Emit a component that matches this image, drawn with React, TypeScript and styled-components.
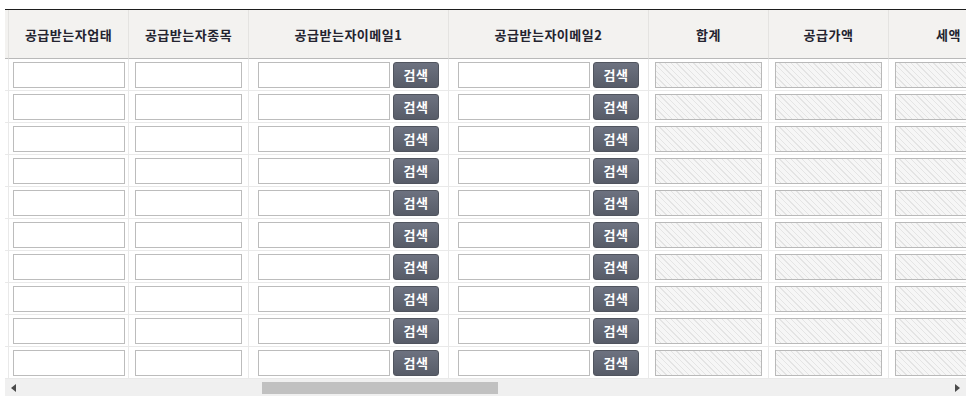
import React, { useLayoutEffect, useRef, useState } from 'react';
import styled, { createGlobalStyle } from 'styled-components';

const GlobalStyle = createGlobalStyle`
  body {
    margin: 0;
    background: #fff;
    font-family: "Noto Sans CJK KR", "Noto Sans", sans-serif;
  }
`;

type Kind = 'text' | 'search' | 'disabled';

interface Column {
  label: string;
  width: number;
  kind: Kind;
  pad?: string;
}

const columns: Column[] = [
  { label: '선택', width: 40, kind: 'text' },
  { label: '작성일자', width: 120, kind: 'text' },
  { label: '공급받는자등록번호', width: 140, kind: 'text' },
  { label: '종사업장번호', width: 100, kind: 'text' },
  { label: '공급받는자상호', width: 140, kind: 'text' },
  { label: '공급받는자성명', width: 100, kind: 'text' },
  { label: '공급받는자주소', width: 220, kind: 'text' },
  { label: '공급받는자담당자', width: 120, kind: 'text' },
  { label: '공급받는자업태', width: 120, kind: 'text', pad: '3px 3px 2px 4px' },
  { label: '공급받는자종목', width: 120, kind: 'text' },
  { label: '공급받는자이메일1', width: 200, kind: 'search' },
  { label: '공급받는자이메일2', width: 200, kind: 'search' },
  { label: '합계', width: 120, kind: 'disabled' },
  { label: '공급가액', width: 120, kind: 'disabled' },
  { label: '세액', width: 120, kind: 'disabled' },
  { label: '비고', width: 200, kind: 'text' },
  { label: '품목일자', width: 120, kind: 'text' },
  { label: '품목명', width: 160, kind: 'text' },
  { label: '규격', width: 100, kind: 'text' },
  { label: '수량', width: 100, kind: 'text' },
  { label: '단가', width: 120, kind: 'text' },
  { label: '품목공급가액', width: 120, kind: 'disabled' },
  { label: '품목세액', width: 120, kind: 'disabled' },
  { label: '품목비고', width: 160, kind: 'text' },
  { label: '영수/청구', width: 100, kind: 'text' },
  { label: '현금', width: 120, kind: 'text' },
  { label: '수표', width: 120, kind: 'text' },
  { label: '어음', width: 120, kind: 'text' },
  { label: '외상미수금', width: 135, kind: 'text' },
];

const ROWS = 10;
const ARROW = 17;
const tableWidth = columns.reduce((sum, c) => sum + c.width, 0);

const Page = styled.div`
  padding: 9px 0 0 5px;
`;

const Frame = styled.div`
  width: 961px;
  border-top: 1px solid #1e1e1e;
`;

const ScrollArea = styled.div`
  overflow: hidden;
`;

const Grid = styled.table<{ $width: number }>`
  width: ${p => p.$width}px;
  table-layout: fixed;
  border-collapse: separate;
  border-spacing: 0;
`;

const HeadCell = styled.th`
  height: 48px;
  padding: 0;
  background: #f3f2f0;
  border-right: 1px solid #e4e3e1;
  border-bottom: 1px solid #b9b9b9;
  color: #23232f;
  font-size: 13px;
  font-weight: 700;
  letter-spacing: 0.5px;
  text-align: center;
  white-space: nowrap;
  overflow: hidden;
`;

const BodyCell = styled.td<{ $pad?: string; $search?: boolean }>`
  padding: ${p => p.$pad ?? (p.$search ? '3px 9px 2px' : '3px 6px 2px')};
  border-right: 1px solid #e9e9e9;
  border-bottom: 1px solid #e9e9e9;
  vertical-align: top;
`;

const Field = styled.input`
  display: block;
  width: 100%;
  height: 26px;
  box-sizing: border-box;
  border: 1px solid #bcbcbc;
  border-radius: 0;
  background: #fff;
  padding: 0 4px;
  font-family: inherit;
  font-size: 12px;
  outline: none;

  &:disabled {
    border-color: #b9b9b9;
    background: repeating-linear-gradient(
      45deg,
      #f6f6f6 0px,
      #f6f6f6 3px,
      #e4e4e4 3px,
      #e4e4e4 4px
    );
  }
`;

const SearchGroup = styled.div`
  display: flex;
  gap: 3px;

  ${Field} {
    flex: 1;
    min-width: 0;
  }
`;

const SearchButton = styled.button`
  display: flex;
  align-items: center;
  justify-content: center;
  flex-shrink: 0;
  width: 46px;
  height: 26px;
  box-sizing: border-box;
  padding: 0 0 1px;
  border: 1px solid #50545e;
  border-radius: 3px;
  background: linear-gradient(#6d7280, #575c68);
  color: #fff;
  font-family: inherit;
  font-size: 13px;
  font-weight: 700;
  line-height: 1;
  letter-spacing: 0.5px;
  cursor: pointer;
`;

const ScrollBar = styled.div`
  display: flex;
  height: 17px;
  background: #f0f0f0;
`;

const ArrowButton = styled.button<{ $dir: 'left' | 'right' }>`
  display: flex;
  align-items: center;
  justify-content: center;
  width: ${ARROW}px;
  height: 17px;
  padding: 0;
  border: none;
  background: transparent;
  cursor: default;

  &::before {
    content: '';
    border-top: 4px solid transparent;
    border-bottom: 4px solid transparent;
    ${p => (p.$dir === 'left' ? 'border-right: 5px solid #4a4a4a;' : 'border-left: 5px solid #4a4a4a;')}
  }
`;

const Track = styled.div`
  position: relative;
  flex: 1;
`;

const Thumb = styled.div`
  position: absolute;
  top: 3px;
  bottom: 2px;
  background: #c1c1c1;
`;

function Cell({ col }: { col: Column }) {
  if (col.kind === 'search') {
    return (
      <BodyCell $search $pad={col.pad}>
        <SearchGroup>
          <Field type="text" />
          <SearchButton type="button">검색</SearchButton>
        </SearchGroup>
      </BodyCell>
    );
  }
  return (
    <BodyCell $pad={col.pad}>
      <Field type="text" disabled={col.kind === 'disabled'} />
    </BodyCell>
  );
}

export default function App() {
  const scrollRef = useRef<HTMLDivElement>(null);
  const [thumb, setThumb] = useState({ left: 0, width: 0 });

  const measure = () => {
    const el = scrollRef.current;
    if (!el) return;
    const track = el.clientWidth - ARROW * 2;
    const width = Math.max(20, (track * el.clientWidth) / el.scrollWidth);
    const max = el.scrollWidth - el.clientWidth;
    const left = max > 0 ? ((track - width) * el.scrollLeft) / max : 0;
    setThumb({ left, width });
  };

  const scrollBy = (dx: number) => {
    if (!scrollRef.current) return;
    scrollRef.current.scrollLeft += dx;
    measure();
  };

  useLayoutEffect(() => {
    if (scrollRef.current) scrollRef.current.scrollLeft = 976;
    measure();
  }, []);

  return (
    <>
      <GlobalStyle />
      <Page>
        <Frame>
          <ScrollArea ref={scrollRef}>
            <Grid $width={tableWidth}>
              <colgroup>
                {columns.map(c => (
                  <col key={c.label} style={{ width: c.width }} />
                ))}
              </colgroup>
              <thead>
                <tr>
                  {columns.map(c => (
                    <HeadCell key={c.label}>{c.label}</HeadCell>
                  ))}
                </tr>
              </thead>
              <tbody>
                {Array.from({ length: ROWS }, (_, r) => (
                  <tr key={r}>
                    {columns.map(c => (
                      <Cell key={c.label} col={c} />
                    ))}
                  </tr>
                ))}
              </tbody>
            </Grid>
          </ScrollArea>
          <ScrollBar>
            <ArrowButton $dir="left" aria-label="왼쪽" onClick={() => scrollBy(-40)} />
            <Track>
              <Thumb style={{ left: thumb.left, width: thumb.width }} />
            </Track>
            <ArrowButton $dir="right" aria-label="오른쪽" onClick={() => scrollBy(40)} />
          </ScrollBar>
        </Frame>
      </Page>
    </>
  );
}
